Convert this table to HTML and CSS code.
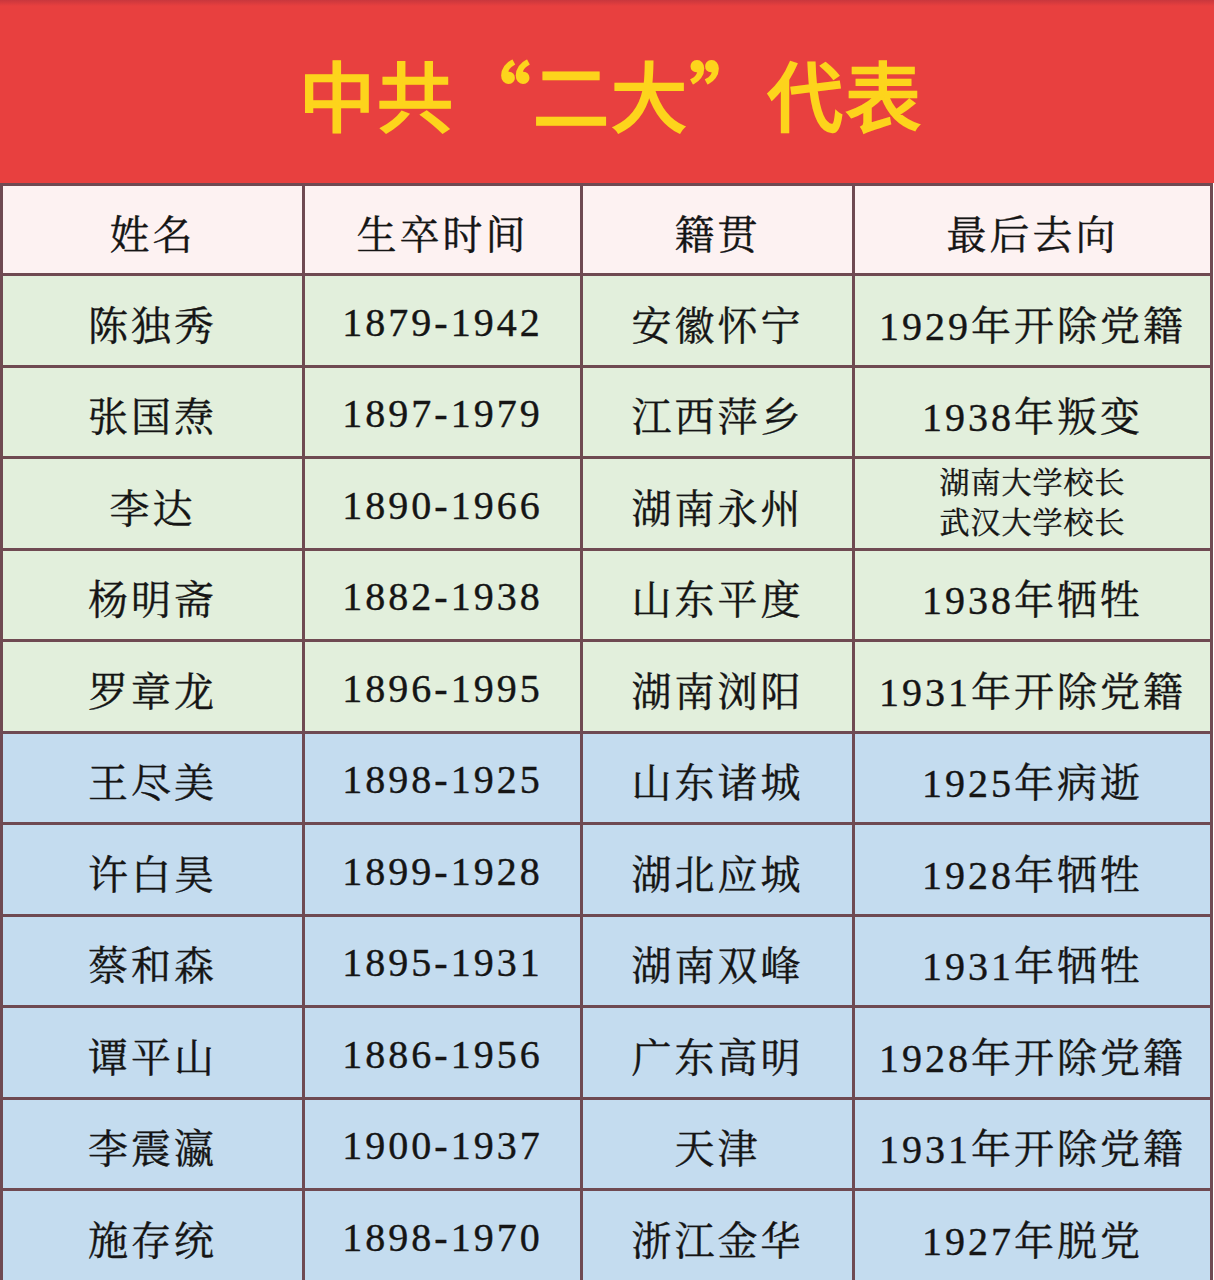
FILE: index.html
```html
<!DOCTYPE html>
<html lang="zh-CN">
<head>
<meta charset="utf-8">
<title>中共“二大”代表</title>
<link rel="stylesheet" href="styles.css">
</head>
<body>
<div class="page">
  <header class="banner">
    <h1 class="title">中共“二大”代表</h1>
  </header>
  <div class="grid">
    <div class="cell head">姓名</div>
    <div class="cell head">生卒时间</div>
    <div class="cell head">籍贯</div>
    <div class="cell head">最后去向</div>

    <div class="cell g">陈独秀</div><div class="cell g">1879-1942</div><div class="cell g">安徽怀宁</div><div class="cell g">1929年开除党籍</div>
    <div class="cell g">张国焘</div><div class="cell g">1897-1979</div><div class="cell g">江西萍乡</div><div class="cell g">1938年叛变</div>
    <div class="cell g">李达</div><div class="cell g">1890-1966</div><div class="cell g">湖南永州</div><div class="cell g small"><span>湖南大学校长</span><span>武汉大学校长</span></div>
    <div class="cell g">杨明斋</div><div class="cell g">1882-1938</div><div class="cell g">山东平度</div><div class="cell g">1938年牺牲</div>
    <div class="cell g">罗章龙</div><div class="cell g">1896-1995</div><div class="cell g">湖南浏阳</div><div class="cell g">1931年开除党籍</div>

    <div class="cell b">王尽美</div><div class="cell b">1898-1925</div><div class="cell b">山东诸城</div><div class="cell b">1925年病逝</div>
    <div class="cell b">许白昊</div><div class="cell b">1899-1928</div><div class="cell b">湖北应城</div><div class="cell b">1928年牺牲</div>
    <div class="cell b">蔡和森</div><div class="cell b">1895-1931</div><div class="cell b">湖南双峰</div><div class="cell b">1931年牺牲</div>
    <div class="cell b">谭平山</div><div class="cell b">1886-1956</div><div class="cell b">广东高明</div><div class="cell b">1928年开除党籍</div>
    <div class="cell b">李震瀛</div><div class="cell b">1900-1937</div><div class="cell b">天津</div><div class="cell b">1931年开除党籍</div>
    <div class="cell b">施存统</div><div class="cell b">1898-1970</div><div class="cell b">浙江金华</div><div class="cell b">1927年脱党</div>
  </div>
</div>
</body>
</html>
```
FILE: styles.css
```css
html, body {
  margin: 0;
  padding: 0;
  background: #ffffff;
}
.page {
  width: 1214px;
  height: 1280px;
  overflow: hidden;
}
.banner {
  height: 183px;
  background: linear-gradient(#c9373d 0, #e8403f 6px, #e8403f 100%);
  display: flex;
  align-items: center;
  justify-content: center;
}
.title {
  margin: 0;
  padding-top: 2px;
  padding-left: 8px;
  font-family: "Noto Sans CJK SC", "Noto Sans", sans-serif;
  font-weight: 400;
  font-size: 76px;
  line-height: 1;
  letter-spacing: 2px;
  color: #fdd41c;
  -webkit-text-stroke: 2.5px #fdd41c;
  text-shadow: 0 0 2px #e3901f;
}
.grid {
  display: grid;
  width: 1207px;
  grid-template-columns: 299px 275px 269px 355px;
  grid-template-rows: 87px repeat(11, 88.5px);
  gap: 3px;
  padding: 3px;
  background: #6f4a52;
}
.cell {
  display: flex;
  flex-direction: column;
  align-items: center;
  justify-content: center;
  font-family: "Liberation Serif", "Noto Serif CJK SC", "Noto Sans CJK SC", serif;
  font-size: 40px;
  letter-spacing: 3px;
  color: #151515;
  -webkit-text-stroke: 0.4px #151515;
  padding-top: 4px;
}
.head {
  background: #fdf2f2;
}
.g {
  background: #e2efdc;
}
.b {
  background: #c4dcef;
}
.small {
  font-size: 30px;
  line-height: 40px;
  letter-spacing: 1px;
  padding-top: 0;
}
```
